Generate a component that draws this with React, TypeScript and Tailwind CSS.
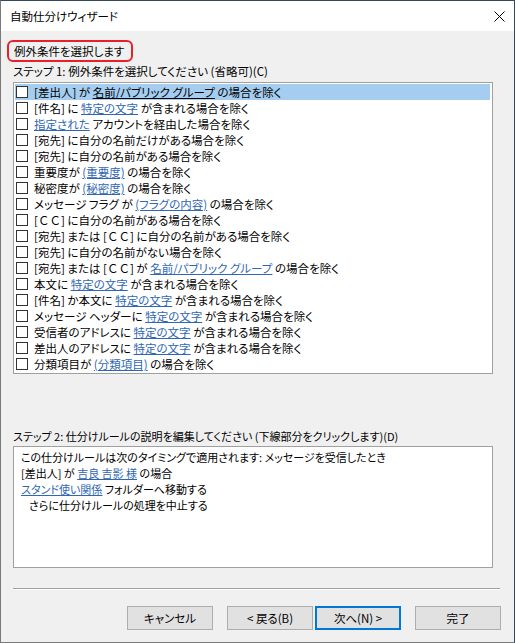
const L = ({ children, dark }: { children: React.ReactNode; dark?: boolean }) => (
  <span className={dark ? "underline text-black" : "underline text-[#2f67b2]"}>{children}</span>
)

// full-width CC keeps its wide glyphs
const CC = () => <span className="[font-feature-settings:normal]">[ＣＣ]</span>

type Row = React.ReactNode

const rows: Row[] = [
  <>[差出人] が <L dark>名前/パブリック グループ</L> の場合を除く</>,
  <>[件名] に <L>特定の文字</L> が含まれる場合を除く</>,
  <><L>指定された</L> アカウントを経由した場合を除く</>,
  <>[宛先] に自分の名前だけがある場合を除く</>,
  <>[宛先] に自分の名前がある場合を除く</>,
  <>重要度が <L>(重要度)</L> の場合を除く</>,
  <>秘密度が <L>(秘密度)</L> の場合を除く</>,
  <>メッセージ フラグ が <L>(フラグの内容)</L> の場合を除く</>,
  <><CC /> に自分の名前がある場合を除く</>,
  <>[宛先] または <CC /> に自分の名前がある場合を除く</>,
  <>[宛先] に自分の名前がない場合を除く</>,
  <>[宛先] または <CC /> が <L>名前/パブリック グループ</L> の場合を除く</>,
  <>本文に <L>特定の文字</L> が含まれる場合を除く</>,
  <>[件名] か本文に <L>特定の文字</L> が含まれる場合を除く</>,
  <>メッセージ ヘッダーに <L>特定の文字</L> が含まれる場合を除く</>,
  <>受信者のアドレスに <L>特定の文字</L> が含まれる場合を除く</>,
  <>差出人のアドレスに <L>特定の文字</L> が含まれる場合を除く</>,
  <>分類項目が <L>(分類項目)</L> の場合を除く</>,
]

function Button({ label, primary, className }: { label: string; primary?: boolean; className?: string }) {
  return (
    <div
      className={
        "w-[86px] h-[24px] flex items-center justify-center bg-[#e1e1e1] text-[11.5px] " +
        (primary ? "border-2 border-[#0078d7] " : "border border-[#adadad] ") +
        (className ?? "")
      }
    >
      {label}
    </div>
  )
}

export default function App() {
  return (
    <div
      className="w-[515px] h-[643px] flex flex-col bg-[#f0f0f0] border-l border-b border-[#7a7a7a] border-t border-r border-t-[#34495a] border-r-[#34495a] text-[11.5px] leading-[16px] text-black [font-feature-settings:'palt']"
      style={{ fontFamily: '"Noto Sans CJK JP", "Noto Sans", sans-serif' }}
    >
      {/* title bar */}
      <div className="h-[30px] bg-white flex items-center justify-between pl-[9px] pr-[9px] shrink-0">
        <span>自動仕分けウィザード</span>
        <svg width="11" height="11" viewBox="0 0 11 11" className="mt-[1px]">
          <path d="M0.5 0.5 L10.5 10.5 M10.5 0.5 L0.5 10.5" stroke="#000" strokeWidth="1" />
        </svg>
      </div>

      <div className="flex flex-col pl-[12px] pr-[12px]">
        <div className="mt-[9px] ml-[-6px] w-[126px] h-[22px] border-2 border-[#e8202a] rounded-[6px] flex items-center pl-[5px]">
          例外条件を選択します
        </div>
        <div className="mt-[1px] h-[16px]">ステップ 1: 例外条件を選択してください (省略可)(C)</div>

        <div className="mt-[3px] w-[480px] h-[292px] bg-white border border-[#a0a0a0] p-[1px] pr-[2px]">
          {rows.map((r, i) => (
            <div key={i} className={"h-[16px] flex items-center whitespace-nowrap " + (i === 0 ? "bg-[#a4cdf0]" : "")}>
              <span className="ml-[1px] w-[12px] h-[12px] border border-[#333] bg-white shrink-0" />
              <span className="ml-[6px]">{r}</span>
            </div>
          ))}
        </div>

        <div className="mt-[54px] h-[16px] text-[11px]">ステップ 2: 仕分けルールの説明を編集してください (下線部分をクリックします)(D)</div>
        <div className="mt-[2px] w-[480px] h-[122px] bg-white border border-[#a0a0a0] pt-[2px] pl-[7px] text-[11px]">
          <div>この仕分けルールは次のタイミングで適用されます: メッセージを受信したとき</div>
          <div>[差出人] が <L>吉良 吉影 様</L> の場合</div>
          <div><L>スタンド使い関係</L> フォルダーへ移動する</div>
          <div className="pl-[8px]">さらに仕分けルールの処理を中止する</div>
        </div>

        <div className="mt-[20px] w-[487px] h-[2px] border-t border-[#a0a0a0] border-b border-b-white" />

        <div className="mt-[16px] flex">
          <Button label="キャンセル" className="ml-[114px]" />
          <Button label="< 戻る(B)" className="ml-[14px]" />
          <Button label="次へ(N) >" primary className="ml-[2px]" />
          <Button label="完了" className="ml-[14px]" />
        </div>
      </div>
    </div>
  )
}
